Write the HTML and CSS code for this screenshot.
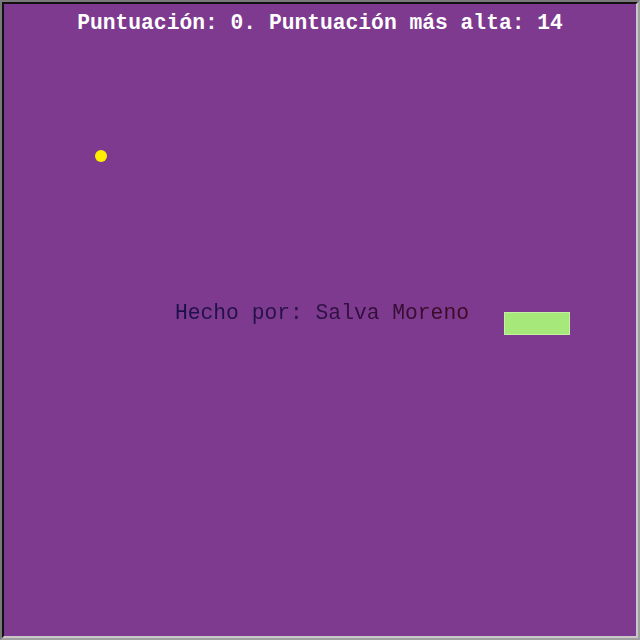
FILE: index.html
```html
<!DOCTYPE html>
<html lang="es">
<head>
<meta charset="utf-8">
<title>Juego</title>
<link rel="stylesheet" href="styles.css">
</head>
<body>
<div class="frame">
  <div class="board">
    <div class="score">Puntuación: 0. Puntuación más alta: 14</div>
    <div class="ball"></div>
    <div class="credit">Hecho por: Salva Moreno</div>
    <div class="paddle"></div>
  </div>
</div>
</body>
</html>
```
FILE: styles.css
```css
html, body {
  margin: 0;
  padding: 0;
  width: 640px;
  height: 640px;
  background: #ffffff;
}
.frame {
  width: 640px;
  height: 640px;
  box-sizing: border-box;
  border: 2px solid #7a7a7a;
  border-bottom-color: #a0a0a0;
  border-right-color: #a0a0a0;
  background: #7e3a8f;
}
.board {
  position: relative;
  width: 100%;
  height: 100%;
  box-sizing: border-box;
  border-top: 2px solid #111;
  border-left: 2px solid #111;
  border-right: 2px solid #c8c8c8;
  border-bottom: 2px solid #c8c8c8;
  background: #7e3a8f;
  font-family: "Liberation Mono", "Courier New", monospace;
}
.score {
  position: absolute;
  top: 7px;
  left: 0;
  right: 0;
  text-align: center;
  color: #ffffff;
  font-weight: bold;
  font-size: 21.3px;
  line-height: 24px;
}
.ball {
  position: absolute;
  left: 91px;
  top: 146px;
  width: 12px;
  height: 12px;
  border-radius: 50%;
  background: #ffee00;
}
.credit {
  position: absolute;
  left: 171px;
  top: 297px;
  font-size: 21.3px;
  line-height: 24px;
  background: linear-gradient(90deg, #1c104a 0%, #2e1248 50%, #3e0a22 100%);
  -webkit-background-clip: text;
  background-clip: text;
  color: transparent;
}
.paddle {
  position: absolute;
  left: 500px;
  top: 308px;
  width: 64px;
  height: 21px;
  background: #a6e87a;
  border: 1px solid #c4f0a4;
}
```
